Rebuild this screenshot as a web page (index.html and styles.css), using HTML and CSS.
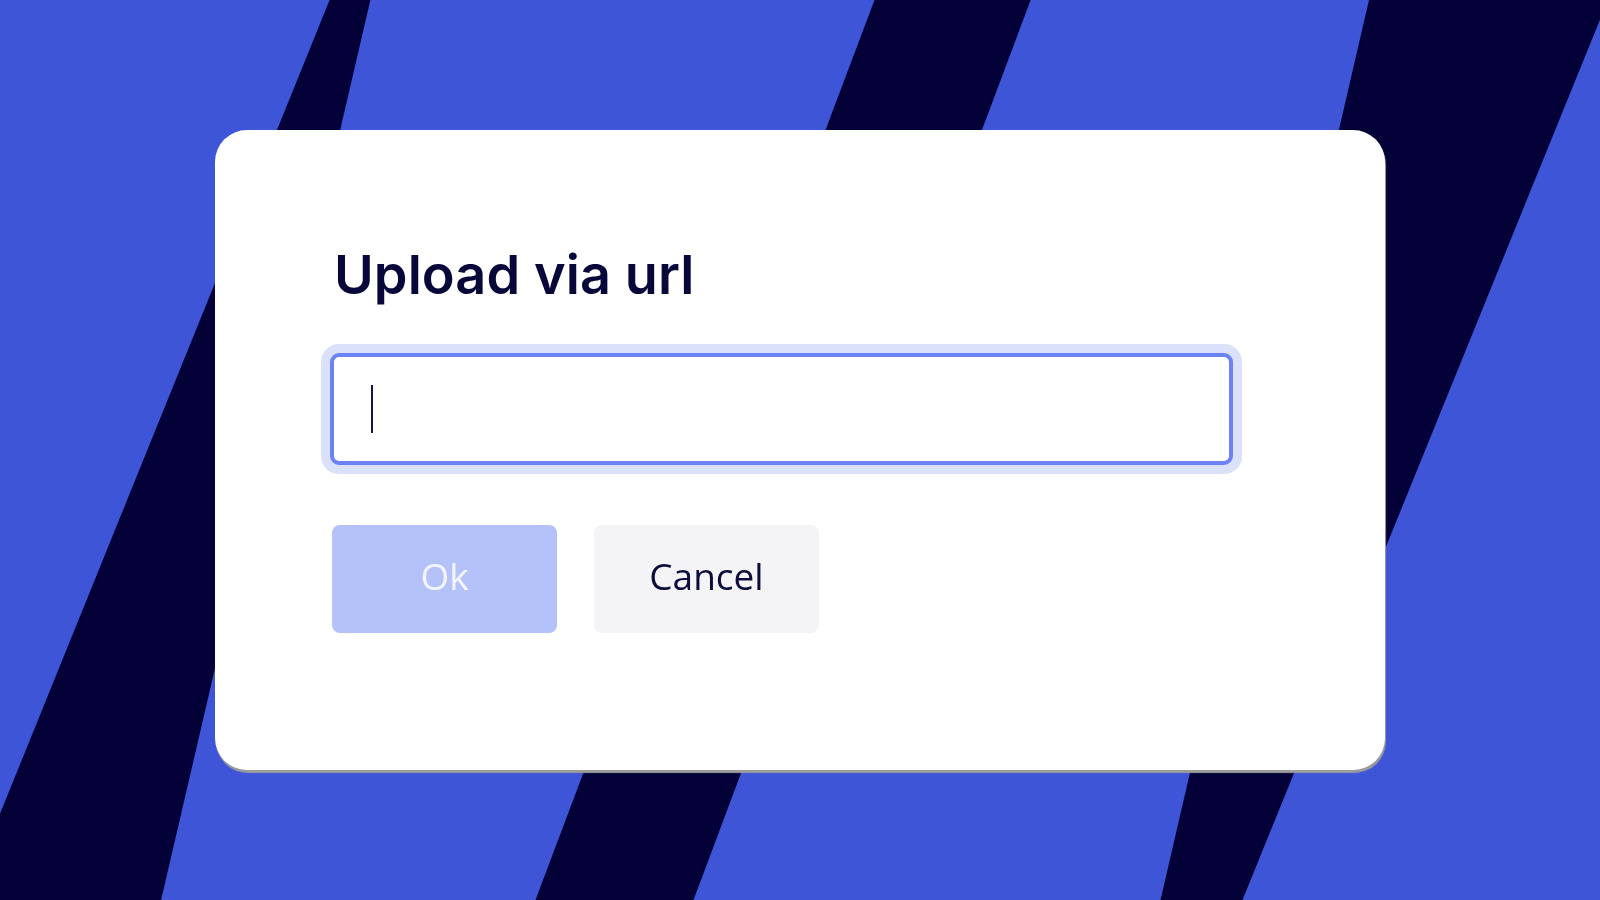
FILE: index.html
```html
<!DOCTYPE html>
<html lang="en">
<head>
<meta charset="utf-8">
<title>Upload via url</title>
<link rel="stylesheet" href="styles.css">
</head>
<body>
<svg class="backdrop" viewBox="0 0 1600 900" preserveAspectRatio="none" aria-hidden="true">
  <rect width="1600" height="900" fill="#3f55d8"/>
  <polygon points="329.6,0 370.4,0 161.1,900 -34.9,900" fill="#040038"/>
  <polygon points="874.5,0 1030.6,0 693.5,900 535.5,900" fill="#040038"/>
  <polygon points="1369,0 1608,0 1242.5,900 1160.5,900" fill="#040038"/>
</svg>
<main class="stage">
  <section class="dialog" role="dialog" aria-labelledby="dlg-title">
    <h1 id="dlg-title" class="dialog-title">Upload via url</h1>
    <div class="url-field" role="textbox" aria-label="URL"><span class="caret"></span></div>
    <div class="actions">
      <button class="btn btn-ok" type="button">Ok</button>
      <button class="btn btn-cancel" type="button">Cancel</button>
    </div>
  </section>
</main>
</body>
</html>
```

FILE: styles.css
```css
html, body {
  margin: 0;
  padding: 0;
  height: 100%;
  overflow: hidden;
}

body {
  background: #3f55d8;
  font-family: "Open Sans", "Noto Sans", sans-serif;
}

.backdrop {
  position: fixed;
  left: 0;
  top: 0;
  width: 100%;
  height: 100%;
  display: block;
}

.stage {
  position: relative;
  height: 100%;
  display: flex;
  align-items: center;
  justify-content: center;
}

.dialog {
  box-sizing: border-box;
  width: 1170px;
  padding: 113px 152px 137px 115px;
  background: #ffffff;
  border-radius: 32px;
  box-shadow: 1px 3px 1px #9c9c9c;
  display: flex;
  flex-direction: column;
}

.dialog-title {
  margin: 0 0 0 4px;
  font-family: Inter, "Noto Sans", sans-serif;
  font-weight: 600;
  font-size: 54px;
  line-height: 1.2;
  color: #07073a;
  letter-spacing: 0.1px;
}

.url-field {
  box-sizing: border-box;
  margin-top: 45px;
  width: 903px;
  height: 112px;
  border: 4px solid #6b83f7;
  border-radius: 9px;
  box-shadow: 0 0 0 9px #dbe0fb;
  background: #ffffff;
  display: flex;
  align-items: center;
  padding-left: 37px;
}

.caret {
  width: 2px;
  height: 48px;
  background: #15153f;
}

.actions {
  margin-top: 60px;
  display: flex;
  gap: 37px;
  padding-left: 2px;
}

.btn {
  box-sizing: border-box;
  width: 225px;
  height: 108px;
  border: none;
  border-radius: 8px;
  font-family: "Open Sans", "Noto Sans", sans-serif;
  font-size: 37px;
  font-weight: 400;
  line-height: 1;
  padding: 0 0 6px 0;
  display: flex;
  align-items: center;
  justify-content: center;
  cursor: pointer;
}

.btn-ok {
  background: #b5c2fa;
  color: #f4f6ff;
}

.btn-cancel {
  background: #f4f4f7;
  color: #0b0b3c;
}
```
